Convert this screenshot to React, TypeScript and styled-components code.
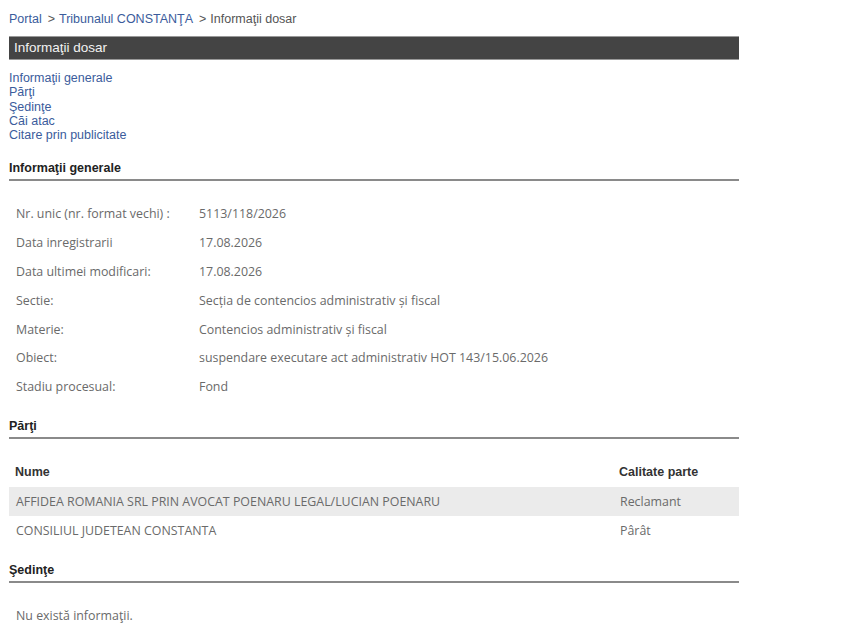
import React from 'react';
import styled, { createGlobalStyle } from 'styled-components';

const GlobalStyle = createGlobalStyle`
  body {
    margin: 0;
    background: #fff;
    font-family: 'Liberation Sans', Arial, sans-serif;
  }
`;

const Page = styled.div`
  width: 730px;
  padding: 11px 0 0 9px;
`;

const Breadcrumb = styled.div`
  font-size: 12.5px;
  line-height: 16px;
  color: #555;
  margin-bottom: 9px;
`;

const Crumb = styled.a`
  color: #3b5c9c;
  text-decoration: none;
`;

const Sep = styled.span`
  margin: 0 4px 0 6px;
`;

const TitleBar = styled.div`
  background: #444;
  border-top: 1px solid #999;
  border-bottom: 1px solid #999;
  color: #f2f2f2;
  font-size: 13.5px;
  line-height: 22px;
  padding-left: 5px;
`;

const NavList = styled.div`
  display: flex;
  flex-direction: column;
  margin-top: 11px;
  font-size: 12.5px;
  line-height: 14.3px;
`;

const NavLink = styled.a`
  color: #3b5c9c;
  text-decoration: none;
`;

const SectionTitle = styled.h2<{ $top: number }>`
  margin: ${(p) => p.$top}px 0 0;
  font-size: 12.5px;
  font-weight: bold;
  color: #222;
  line-height: 16px;
  padding-bottom: 3px;
  border-bottom: 2px solid #8a8a8a;
`;

const Table = styled.table`
  width: 100%;
  border-collapse: collapse;
  font-family: 'Open Sans', sans-serif;
  font-size: 12.4px;
  color: #6a6a6a;
`;

const InfoTable = styled(Table)`
  margin-top: 18px;
`;

const Cell = styled.td<{ $w?: number }>`
  padding: 0 0 0 7px;
  height: 28.8px;
  width: ${(p) => (p.$w ? `${p.$w}px` : 'auto')};
  vertical-align: middle;
`;

const HeadCell = styled.th<{ $w?: number }>`
  font-family: 'Liberation Sans', Arial, sans-serif;
  font-size: 12.5px;
  font-weight: bold;
  color: #333;
  text-align: left;
  padding: 0 0 0 6px;
  height: 30px;
  width: ${(p) => (p.$w ? `${p.$w}px` : 'auto')};
`;

const Row = styled.tr<{ $shade?: boolean }>`
  background: ${(p) => (p.$shade ? '#ebebeb' : 'transparent')};
`;

const PartsTable = styled(Table)`
  margin-top: 18px;
`;

const Empty = styled.div`
  font-family: 'Open Sans', sans-serif;
  font-size: 12.4px;
  color: #6a6a6a;
  padding: 24px 0 0 7px;
`;

const info: [string, string][] = [
  ['Nr. unic (nr. format vechi) :', '5113/118/2026'],
  ['Data inregistrarii', '17.08.2026'],
  ['Data ultimei modificari:', '17.08.2026'],
  ['Sectie:', 'Secția de contencios administrativ și fiscal'],
  ['Materie:', 'Contencios administrativ și fiscal'],
  ['Obiect:', 'suspendare executare act administrativ HOT 143/15.06.2026'],
  ['Stadiu procesual:', 'Fond'],
];

const parties: [string, string][] = [
  ['AFFIDEA ROMANIA SRL PRIN AVOCAT POENARU LEGAL/LUCIAN POENARU', 'Reclamant'],
  ['CONSILIUL JUDETEAN CONSTANTA', 'Pârât'],
];

export default function App() {
  return (
    <Page>
      <GlobalStyle />
      <Breadcrumb>
        <Crumb href="#">Portal</Crumb>
        <Sep>&gt;</Sep>
        <Crumb href="#">Tribunalul CONSTANŢA</Crumb>
        <Sep>&gt;</Sep>
        Informaţii dosar
      </Breadcrumb>
      <TitleBar>Informaţii dosar</TitleBar>
      <NavList>
        <NavLink href="#">Informaţii generale</NavLink>
        <NavLink href="#">Părţi</NavLink>
        <NavLink href="#">Şedinţe</NavLink>
        <NavLink href="#">Căi atac</NavLink>
        <NavLink href="#">Citare prin publicitate</NavLink>
      </NavList>

      <SectionTitle $top={18}>Informaţii generale</SectionTitle>
      <InfoTable>
        <tbody>
          {info.map(([label, value]) => (
            <tr key={label}>
              <Cell $w={176}>{label}</Cell>
              <Cell>{value}</Cell>
            </tr>
          ))}
        </tbody>
      </InfoTable>

      <SectionTitle $top={17}>Părţi</SectionTitle>
      <PartsTable>
        <thead>
          <tr>
            <HeadCell>Nume</HeadCell>
            <HeadCell $w={120}>Calitate parte</HeadCell>
          </tr>
        </thead>
        <tbody>
          {parties.map(([name, role], i) => (
            <Row key={name} $shade={i % 2 === 0}>
              <Cell>{name}</Cell>
              <Cell>{role}</Cell>
            </Row>
          ))}
        </tbody>
      </PartsTable>

      <SectionTitle $top={17}>Şedinţe</SectionTitle>
      <Empty>Nu există informaţii.</Empty>
    </Page>
  );
}
